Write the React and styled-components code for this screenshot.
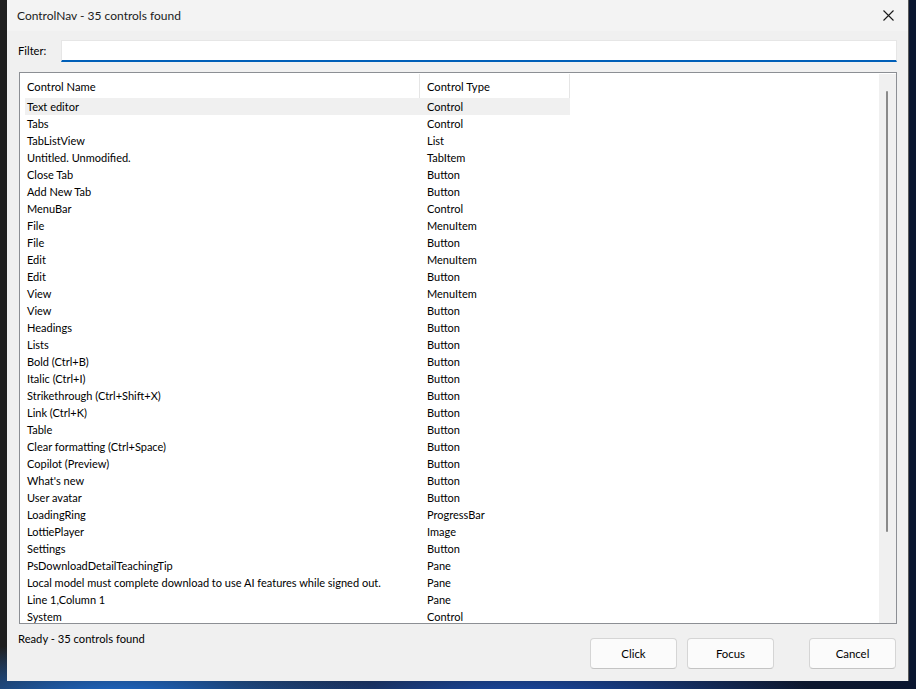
import React from "react";
import styled, { createGlobalStyle } from "styled-components";

const Global = createGlobalStyle`
  html, body { margin: 0; padding: 0; }
  body {
    width: 916px;
    height: 689px;
    overflow: hidden;
    background:
      radial-gradient(ellipse 260px 60px at 120px 700px, #1d6fd8 0%, rgba(29,111,216,0) 100%),
      radial-gradient(ellipse 300px 50px at 520px 700px, #1a4fb5 0%, rgba(26,79,181,0) 100%),
      linear-gradient(90deg, #1f1f1f 0%, #1a1c24 40%, #0a1630 100%);
    font-family: Lato, "Noto Sans", sans-serif;
  }
`;

const Desktop = styled.div`
  padding-left: 7px;
  height: 689px;
  box-sizing: border-box;
`;

const Window = styled.div`
  width: 902px;
  height: 681px;
  background: #f0f0f0;
  display: flex;
  flex-direction: column;
  box-sizing: border-box;
  border-right: 1px solid #5a5a5a;
`;

const TitleBar = styled.div`
  height: 31px;
  flex: none;
  background: #f3f3f3;
  display: flex;
  align-items: center;
  justify-content: space-between;
  padding: 0 10px 0 10px;
  box-sizing: border-box;
`;

const Title = styled.span`
  font-size: 12px;
  color: #1b1b1b;
  margin-top: -1px;
`;

const CloseButton = styled.div`
  width: 20px;
  height: 20px;
  display: flex;
  align-items: center;
  justify-content: center;
  margin-top: -1px;
`;

const Body = styled.div`
  flex: 1;
  display: flex;
  flex-direction: column;
  padding: 9px 11px 12px 11px;
  box-sizing: border-box;
`;

const FilterRow = styled.div`
  display: flex;
  align-items: center;
  height: 22px;
`;

const FilterLabel = styled.label`
  width: 43px;
  font-size: 11.2px;
  color: #000;
  margin-top: -2px;
`;

const FilterInput = styled.div`
  flex: 1;
  height: 22px;
  box-sizing: border-box;
  background: #fff;
  border: 1px solid #e6e6e6;
  border-bottom: 2px solid #005fb8;
`;

const ListBox = styled.div`
  margin: 10px 0 0 1px;
  height: 552px;
  border: 1px solid #8c8f94;
  background: #fff;
  display: flex;
  overflow: hidden;
  box-sizing: border-box;
`;

const Table = styled.div`
  flex: 1;
  display: flex;
  flex-direction: column;
  overflow: hidden;
`;

const HeaderRow = styled.div`
  display: grid;
  grid-template-columns: 400px 150px;
  height: 25px;
  flex: none;
`;

const HeaderCell = styled.div`
  font-size: 11.2px;
  color: #000;
  padding-left: 7px;
  display: flex;
  align-items: center;
  border-right: 1px solid #e5e5e5;
  margin-top: 1px;
`;

const Row = styled.div`
  display: grid;
  grid-template-columns: 395px 150px;
  height: 17px;
  flex: none;
  margin-left: 5px;
  width: 545px;
  background: ${(p) => (p.$selected ? "#f0f0f0" : "transparent")};
`;

const Cell = styled.div`
  font-size: 11px;
  line-height: 18px;
  color: #000;
  padding-left: ${(p) => (p.$first ? "2px" : "7px")};
  white-space: nowrap;
  overflow: hidden;
`;

const ScrollTrack = styled.div`
  width: 17px;
  flex: none;
  background: #f0f0f0;
  margin-top: 1px;
  position: relative;
`;

const ScrollThumb = styled.div`
  position: absolute;
  left: 7px;
  top: 17px;
  width: 2px;
  height: 441px;
  background: #8a8a8a;
  border-radius: 1px;
`;

const Footer = styled.div`
  display: flex;
  justify-content: space-between;
  align-items: flex-start;
  margin-top: 6px;
`;

const Status = styled.div`
  font-size: 11.2px;
  color: #000;
  margin-top: 2px;
`;

const Buttons = styled.div`
  display: flex;
  gap: 10px;
  margin-top: 8px;
  margin-right: 1px;
`;

const Button = styled.button`
  width: 87px;
  height: 31px;
  box-sizing: border-box;
  background: #fbfbfb;
  border: 1px solid #d5d5d5;
  border-bottom-color: #c4c4c4;
  border-radius: 4px;
  font-family: Lato, "Noto Sans", sans-serif;
  font-size: 11.4px;
  color: #000;
  margin-left: ${(p) => (p.$gapLeft ? "25px" : "0")};
  padding: 0;
`;

const rows = [
  ["Text editor", "Control"],
  ["Tabs", "Control"],
  ["TabListView", "List"],
  ["Untitled. Unmodified.", "TabItem"],
  ["Close Tab", "Button"],
  ["Add New Tab", "Button"],
  ["MenuBar", "Control"],
  ["File", "MenuItem"],
  ["File", "Button"],
  ["Edit", "MenuItem"],
  ["Edit", "Button"],
  ["View", "MenuItem"],
  ["View", "Button"],
  ["Headings", "Button"],
  ["Lists", "Button"],
  ["Bold (Ctrl+B)", "Button"],
  ["Italic (Ctrl+I)", "Button"],
  ["Strikethrough (Ctrl+Shift+X)", "Button"],
  ["Link (Ctrl+K)", "Button"],
  ["Table", "Button"],
  ["Clear formatting (Ctrl+Space)", "Button"],
  ["Copilot (Preview)", "Button"],
  ["What's new", "Button"],
  ["User avatar", "Button"],
  ["LoadingRing", "ProgressBar"],
  ["LottiePlayer", "Image"],
  ["Settings", "Button"],
  ["PsDownloadDetailTeachingTip", "Pane"],
  ["Local model must complete download to use AI features while signed out.", "Pane"],
  ["Line 1,Column 1", "Pane"],
  ["System", "Control"],
];

export default function App() {
  return (
    <>
      <Global />
      <Desktop>
        <Window>
          <TitleBar>
            <Title>ControlNav - 35 controls found</Title>
            <CloseButton>
              <svg width="11" height="11" viewBox="0 0 11 11">
                <path d="M0.5 0.5 L10.5 10.5 M10.5 0.5 L0.5 10.5" stroke="#1a1a1a" strokeWidth="1.1" />
              </svg>
            </CloseButton>
          </TitleBar>
          <Body>
            <FilterRow>
              <FilterLabel>Filter:</FilterLabel>
              <FilterInput />
            </FilterRow>
            <ListBox>
              <Table>
                <HeaderRow>
                  <HeaderCell>Control Name</HeaderCell>
                  <HeaderCell>Control Type</HeaderCell>
                </HeaderRow>
                {rows.map(([name, type], i) => (
                  <Row key={i} $selected={i === 0}>
                    <Cell $first>{name}</Cell>
                    <Cell>{type}</Cell>
                  </Row>
                ))}
              </Table>
              <ScrollTrack>
                <ScrollThumb />
              </ScrollTrack>
            </ListBox>
            <Footer>
              <Status>Ready - 35 controls found</Status>
              <Buttons>
                <Button>Click</Button>
                <Button>Focus</Button>
                <Button $gapLeft>Cancel</Button>
              </Buttons>
            </Footer>
          </Body>
        </Window>
      </Desktop>
    </>
  );
}
